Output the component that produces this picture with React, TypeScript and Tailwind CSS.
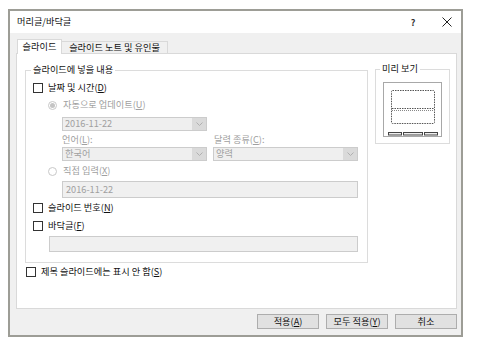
import React from "react";

const font = { fontFamily: '"Noto Sans CJK KR", "Noto Sans", sans-serif' };

function Chevron() {
  return (
    <svg width="7" height="4" viewBox="0 0 7 4" fill="none">
      <path d="M0.5 0.5 L3.5 3.5 L6.5 0.5" stroke="#b0b0b0" strokeWidth="1" />
    </svg>
  );
}

function Checkbox({ label, mnemonic, ml }: { label: string; mnemonic: string; ml: string }) {
  return (
    <div className={`flex h-[12px] items-center gap-[5px] ${ml}`}>
      <div className="h-[10px] w-[10px] border border-[#333333] bg-white" />
      <span className="leading-none text-[#111]">
        {label}(<u>{mnemonic}</u>)
      </span>
    </div>
  );
}

function Radio({ label, mnemonic, checked }: { label: string; mnemonic: string; checked?: boolean }) {
  return (
    <div className="ml-[22px] flex h-[12px] items-center gap-[6px]">
      <div className="flex h-[9px] w-[9px] items-center justify-center rounded-full border border-[#c8c8c8] bg-white">
        {checked && <div className="h-[5px] w-[5px] rounded-full bg-[#c4c4c4]" />}
      </div>
      <span className="leading-none text-[#a0a0a0]">
        {label}(<u>{mnemonic}</u>)
      </span>
    </div>
  );
}

function Select({ value, w }: { value: string; w: string }) {
  return (
    <div className={`flex h-[14px] ${w} border border-[#cccccc] bg-[#efefef]`}>
      <div className="flex flex-1 items-center pl-[2px] leading-none text-[#a0a0a0]">{value}</div>
      <div className="flex w-[14px] items-center justify-center bg-[#dadada]">
        <Chevron />
      </div>
    </div>
  );
}

function Preview() {
  return (
    <svg width="59" height="55" viewBox="0 0 59 55">
      <rect x="0.5" y="0.5" width="58" height="54" fill="#ffffff" stroke="#a8a8a8" />
      <rect x="8.5" y="8.5" width="43" height="33" fill="none" stroke="#555" strokeDasharray="1.5 1" rx="1" />
      <line x1="9" y1="26.5" x2="51" y2="26.5" stroke="#555" strokeDasharray="1.5 1" />
      <line x1="9" y1="28.5" x2="51" y2="28.5" stroke="#888" strokeDasharray="1 1" />
      <rect x="5.5" y="50.5" width="13" height="2.5" fill="#eee" stroke="#444" />
      <rect x="20.5" y="50.5" width="19" height="2.5" fill="#eee" stroke="#444" />
      <rect x="41.5" y="50.5" width="13" height="2.5" fill="#eee" stroke="#444" />
    </svg>
  );
}

export default function App() {
  return (
    <div className="h-[351px] w-[482px] bg-white pl-[8px] pt-[9px] text-[9.2px]" style={font}>
      <div className="flex h-[328px] w-[455px] flex-col border-2 border-[#9d9d96] bg-[#f0f0f0]">
        {/* title bar */}
        <div className="flex h-[22px] items-center bg-white pl-[7px]">
          <span className="text-[9.2px] leading-none text-[#111]">머리글/바닥글</span>
          <div className="ml-auto flex items-center">
            <span className="w-[30px] text-center text-[9px] font-bold leading-none text-[#333]">?</span>
            <div className="ml-[5px] flex w-[28px] justify-center">
              <svg width="10" height="10" viewBox="0 0 10 10">
                <path d="M0.5 0.5 L9.5 9.5 M9.5 0.5 L0.5 9.5" stroke="#222" strokeWidth="1" />
              </svg>
            </div>
          </div>
        </div>

        <div className="flex flex-1 flex-col pl-[6px] pt-[6px]">
          {/* tabs */}
          <div className="flex h-[14px] items-end pl-[1px]">
            <div className="relative z-10 -mb-px flex h-[15px] w-[45px] items-center justify-center border-x border-t border-[#d9d9d9] bg-white leading-none text-[#111]">
              슬라이드
            </div>
            <div className="flex h-[12px] w-[106px] items-center justify-center border-r border-t border-[#d9d9d9] bg-[#f0f0f0] leading-none text-[#111]">
              슬라이드 노트 및 유인물
            </div>
          </div>

          {/* panel */}
          <div className="flex h-[256px] w-[441px] flex-col border border-[#d9d9d9] bg-white">
            <div className="flex items-start pl-[8px]">
              {/* group 1 */}
              <div className="relative mt-[16px] flex h-[193px] w-[343px] flex-col border border-[#dcdcdc]">
                <span className="absolute -top-[6px] left-[5px] bg-white px-[2px] leading-none text-[#111]">
                  슬라이드에 넣을 내용
                </span>
                <div className="mt-[11px]">
                  <Checkbox label="날짜 및 시간" mnemonic="D" ml="ml-[7px]" />
                </div>
                <div className="mt-[5px]">
                  <Radio label="자동으로 업데이트" mnemonic="U" checked />
                </div>
                <div className="ml-[36px] mt-[6px]">
                  <Select value="2016-11-22" w="w-[145px]" />
                </div>
                <div className="ml-[36px] mt-[3px] flex h-[12px] items-center gap-[7px] leading-none text-[#a0a0a0]">
                  <span className="w-[145px]">
                    언어(<u>L</u>):
                  </span>
                  <span>
                    달력 종류(<u>C</u>):
                  </span>
                </div>
                <div className="ml-[36px] mt-[1px] flex gap-[6px]">
                  <Select value="한국어" w="w-[145px]" />
                  <Select value="양력" w="w-[145px]" />
                </div>
                <div className="mt-[4px]">
                  <Radio label="직접 입력" mnemonic="X" />
                </div>
                <div className="ml-[36px] mt-[4px] flex h-[17px] w-[296px] items-center border border-[#cccccc] bg-[#f0f0f0] pl-[3px] leading-none text-[#a0a0a0]">
                  2016-11-22
                </div>
                <div className="mt-[4px]">
                  <Checkbox label="슬라이드 번호" mnemonic="N" ml="ml-[7px]" />
                </div>
                <div className="mt-[6px]">
                  <Checkbox label="바닥글" mnemonic="F" ml="ml-[7px]" />
                </div>
                <div className="ml-[23px] mt-[4px] h-[16px] w-[309px] border border-[#cccccc] bg-[#f0f0f0]" />
              </div>

              {/* group 2 */}
              <div className="relative ml-[7px] mt-[15px] h-[75px] w-[75px] border border-[#dcdcdc] pl-[7px] pt-[12px]">
                <span className="absolute -top-[6px] left-[4px] bg-white px-[2px] leading-none text-[#111]">
                  미리 보기
                </span>
                <Preview />
              </div>
            </div>

            <div className="mt-[3px]">
              <Checkbox label="제목 슬라이드에는 표시 안 함" mnemonic="S" ml="ml-[9px]" />
            </div>
          </div>

          {/* buttons */}
          <div className="mt-[5px] flex w-[441px] justify-end gap-[7px]">
            <button className="flex h-[15px] w-[62px] items-center justify-center border border-[#adadad] bg-[#e1e1e1] leading-none text-[#111]">
              적용(<u>A</u>)
            </button>
            <button className="flex h-[15px] w-[62px] items-center justify-center border border-[#adadad] bg-[#e1e1e1] leading-none text-[#111]">
              모두 적용(<u>Y</u>)
            </button>
            <button className="flex h-[15px] w-[62px] items-center justify-center border border-[#adadad] bg-[#e1e1e1] leading-none text-[#111]">
              취소
            </button>
          </div>
        </div>
      </div>
    </div>
  );
}
